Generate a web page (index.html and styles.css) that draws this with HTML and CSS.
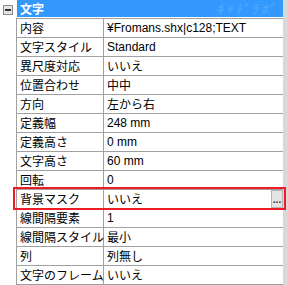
FILE: index.html
```html
<!DOCTYPE html>
<html lang="ja">
<head>
    <meta charset="UTF-8">
    <title>プロパティ</title>
    <link rel="stylesheet" href="styles.css">
</head>
<body>
    <div class="panel">
        <div class="gutter">
            <span class="toggle"></span>
        </div>
        <div class="grid">
            <div class="category">文字<span class="mark">ｷｬﾄﾞﾗﾎﾞ</span></div>
            <div class="rows">
                <div class="row"><div class="name">内容</div><div class="value latin">¥Fromans.shx|c128;TEXT</div></div>
                <div class="row"><div class="name">文字スタイル</div><div class="value latin">Standard</div></div>
                <div class="row"><div class="name">異尺度対応</div><div class="value">いいえ</div></div>
                <div class="row"><div class="name">位置合わせ</div><div class="value">中中</div></div>
                <div class="row"><div class="name">方向</div><div class="value">左から右</div></div>
                <div class="row"><div class="name">定義幅</div><div class="value latin">248 mm</div></div>
                <div class="row"><div class="name">定義高さ</div><div class="value latin">0 mm</div></div>
                <div class="row"><div class="name">文字高さ</div><div class="value latin">60 mm</div></div>
                <div class="row"><div class="name">回転</div><div class="value latin">0</div></div>
                <div class="row"><div class="name">背景マスク</div><div class="value">いいえ<button class="more">...</button></div></div>
                <div class="row"><div class="name">線間隔要素</div><div class="value latin">1</div></div>
                <div class="row"><div class="name">線間隔スタイル</div><div class="value">最小</div></div>
                <div class="row"><div class="name">列</div><div class="value">列無し</div></div>
                <div class="row"><div class="name">文字のフレーム</div><div class="value">いいえ</div></div>
            </div>
        </div>
        <div class="scroll"></div>
    </div>
    <div class="highlight"></div>
</body>
</html>
```

FILE: styles.css
```css
* {
    margin: 0;
    padding: 0;
    box-sizing: border-box;
}

body {
    width: 288px;
    height: 285px;
    background: #ffffff;
    font-family: 'Noto Sans CJK JP', sans-serif;
    font-size: 12px;
    color: #000000;
    overflow: hidden;
    position: relative;
}

.panel {
    display: flex;
    height: 285px;
}

.gutter {
    width: 16px;
    padding: 5px 0 0 3px;
}

.toggle {
    display: block;
    width: 10px;
    height: 10px;
    border: 1px solid #8c8c8c;
    background: #e4e4e4;
    position: relative;
}

.toggle::after {
    content: '';
    position: absolute;
    left: 1px;
    top: 3px;
    width: 6px;
    height: 2px;
    background: #333333;
}

.grid {
    width: 267px;
    display: flex;
    flex-direction: column;
}

.category {
    height: 17px;
    margin-left: 1px;
    margin-bottom: 1px;
    background: #3399ff;
    color: #ffffff;
    font-weight: bold;
    font-size: 12px;
    line-height: 17px;
    padding-left: 3px;
    display: flex;
    justify-content: space-between;
}

.mark {
    color: #4da7ff;
    font-size: 13px;
    line-height: 17px;
    font-style: italic;
    font-weight: bold;
    padding-right: 6px;
    letter-spacing: 3px;
}

.rows {
    border-left: 1px solid #a0a0a0;
    border-top: 1px solid #a0a0a0;
}

.row {
    display: flex;
    height: 19px;
    border-bottom: 1px solid #a0a0a0;
}

.name {
    width: 87px;
    border-right: 1px solid #a0a0a0;
    padding-left: 3px;
    line-height: 18px;
    white-space: nowrap;
}

.value {
    flex: 1;
    padding-left: 3px;
    line-height: 18px;
    white-space: nowrap;
    display: flex;
    justify-content: space-between;
}

.latin {
    font-family: 'Liberation Sans', sans-serif;
    font-size: 12px;
}

.more {
    width: 12px;
    height: 18px;
    border: 1px solid #b4b4b4;
    background: #e4e4e4;
    font-family: 'Liberation Sans', sans-serif;
    font-size: 10px;
    font-weight: bold;
    line-height: 18px;
    color: #333333;
    text-align: center;
    overflow: hidden;
}

.scroll {
    width: 5px;
    margin-left: auto;
    background: #d8d8d8;
}

.highlight {
    position: absolute;
    left: 13px;
    top: 187px;
    width: 273px;
    height: 23px;
    border: 2px solid #ee1c25;
}
```
